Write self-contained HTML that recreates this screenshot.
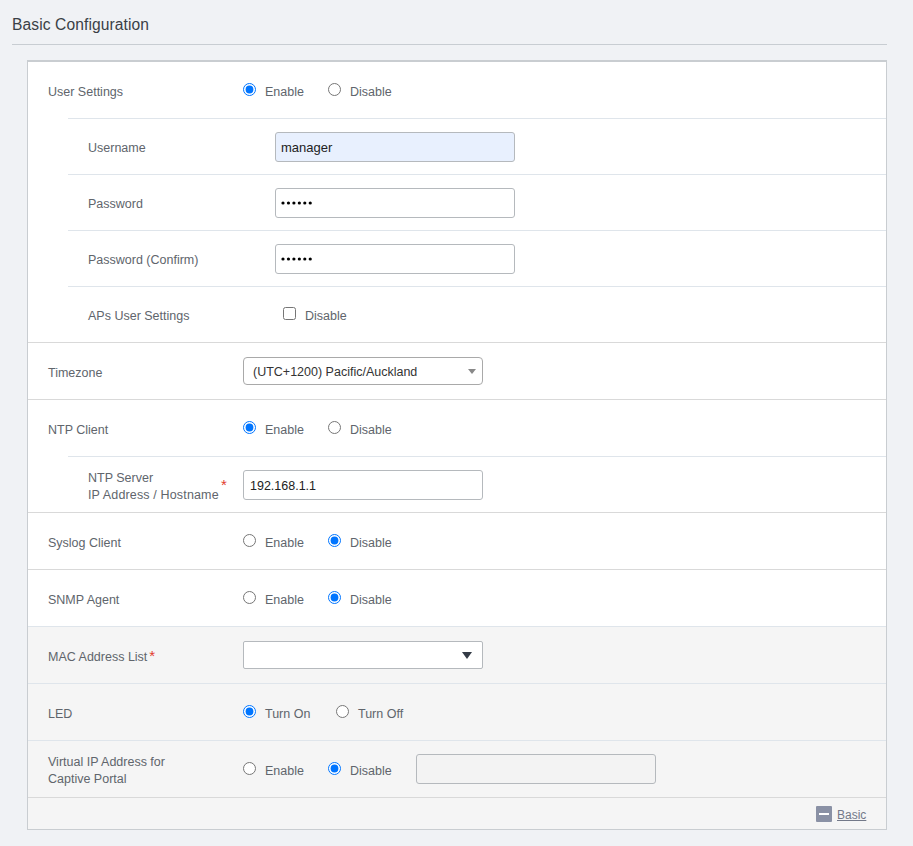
<!DOCTYPE html>
<html><head><meta charset="utf-8">
<style>
html,body{margin:0;padding:0;}
body{width:913px;height:846px;overflow:hidden;background:#f0f2f5;position:relative;font-family:"Liberation Sans",sans-serif;}
.a{position:absolute;}
.t{position:absolute;white-space:nowrap;font-size:12.5px;line-height:15px;color:#60656c;}
.title{position:absolute;left:12px;top:16px;font-size:15.6px;letter-spacing:0.1px;line-height:18px;color:#3a3f46;white-space:nowrap;}
.hl{position:absolute;height:1px;}
.g{background:#d9d9d9;}
.b{background:#dfe5eb;}
.panel{position:absolute;left:27px;top:60px;width:858px;height:767px;border:1px solid #c9cdd1;border-top:2px solid #c9cdd1;background:#fff;}
.lower{position:absolute;left:28px;top:627px;width:858px;height:202px;background:#f5f5f5;}
.nr{position:absolute;margin:0;width:13px;height:13px;}
.radio{position:absolute;width:13px;height:13px;box-sizing:border-box;border-radius:50%;border:1px solid #767676;background:#fff;}
.radio.on{border:2px solid #0075ff;}
.radio.on::after{content:"";position:absolute;left:1.5px;top:1.5px;width:6px;height:6px;border-radius:50%;background:#0075ff;}
.chk{position:absolute;width:13px;height:13px;box-sizing:border-box;border-radius:2px;border:1px solid #767676;background:#fff;}
.inp{position:absolute;box-sizing:border-box;width:240px;height:30px;border:1px solid #b5b9bd;border-radius:3px;background:#fff;}
.sel{position:absolute;box-sizing:border-box;width:240px;height:28px;border:1px solid #a9a9a9;border-radius:4px;background:#fff;}
.it{position:absolute;white-space:nowrap;font-size:13px;line-height:15px;color:#222;}
.req{color:#e23b2e;}
</style></head><body>
<div class="title">Basic Configuration</div>
<div class="hl" style="left:12px;top:44px;width:875px;background:#c8cdd2;"></div>

<div class="panel"></div>
<div class="lower"></div>

<!-- separators -->
<div class="hl b" style="left:68px;top:118px;width:818px;"></div>
<div class="hl b" style="left:68px;top:174px;width:818px;"></div>
<div class="hl b" style="left:68px;top:230px;width:818px;"></div>
<div class="hl b" style="left:68px;top:286px;width:818px;"></div>
<div class="hl g" style="left:28px;top:342px;width:858px;"></div>
<div class="hl g" style="left:28px;top:399px;width:858px;"></div>
<div class="hl b" style="left:68px;top:456px;width:818px;"></div>
<div class="hl g" style="left:28px;top:512px;width:858px;"></div>
<div class="hl g" style="left:28px;top:569px;width:858px;"></div>
<div class="hl b" style="left:28px;top:626px;width:858px;"></div>
<div class="hl b" style="left:28px;top:683px;width:858px;"></div>
<div class="hl b" style="left:28px;top:740px;width:858px;"></div>
<div class="hl g" style="left:28px;top:797px;width:858px;"></div>

<!-- Row 1: User Settings -->
<div class="t" style="left:48px;top:85px;">User Settings</div>
<input type="radio" checked class="nr" style="left:243px;top:83px;">
<div class="t" style="left:265px;top:85px;">Enable</div>
<input type="radio" class="nr" style="left:328px;top:83px;">
<div class="t" style="left:350px;top:85px;">Disable</div>

<!-- Username -->
<div class="t" style="left:88px;top:141px;">Username</div>
<div class="inp" style="left:275px;top:132px;background:#e8f0fe;"></div>
<div class="it" style="left:281px;top:140px;">manager</div>

<!-- Password -->
<div class="t" style="left:88px;top:197px;">Password</div>
<div class="inp" style="left:275px;top:188px;"></div>
<svg class="a" style="left:281px;top:199px;" width="34" height="8" viewBox="0 0 34 8" fill="#000"><circle cx="2.00" cy="4" r="1.6"/><circle cx="7.45" cy="4" r="1.6"/><circle cx="12.90" cy="4" r="1.6"/><circle cx="18.35" cy="4" r="1.6"/><circle cx="23.80" cy="4" r="1.6"/><circle cx="29.25" cy="4" r="1.6"/></svg>

<!-- Password confirm -->
<div class="t" style="left:88px;top:253px;">Password (Confirm)</div>
<div class="inp" style="left:275px;top:244px;"></div>
<svg class="a" style="left:281px;top:255px;" width="34" height="8" viewBox="0 0 34 8" fill="#000"><circle cx="2.00" cy="4" r="1.6"/><circle cx="7.45" cy="4" r="1.6"/><circle cx="12.90" cy="4" r="1.6"/><circle cx="18.35" cy="4" r="1.6"/><circle cx="23.80" cy="4" r="1.6"/><circle cx="29.25" cy="4" r="1.6"/></svg>

<!-- APs -->
<div class="t" style="left:88px;top:309px;">APs User Settings</div>
<input type="checkbox" class="nr" style="left:283px;top:307px;">
<div class="t" style="left:305px;top:309px;">Disable</div>

<!-- Timezone -->
<div class="t" style="left:48px;top:366px;">Timezone</div>
<div class="sel" style="left:243px;top:357px;"></div>
<div class="it" style="left:253px;top:365px;color:#333;font-size:12.5px;">(UTC+1200) Pacific/Auckland</div>
<div class="a" style="left:468px;top:369px;width:0;height:0;border-left:4px solid transparent;border-right:4px solid transparent;border-top:5px solid #888;"></div>

<!-- NTP client -->
<div class="t" style="left:48px;top:423px;">NTP Client</div>
<input type="radio" checked class="nr" style="left:243px;top:421px;">
<div class="t" style="left:265px;top:423px;">Enable</div>
<input type="radio" class="nr" style="left:328px;top:421px;">
<div class="t" style="left:350px;top:423px;">Disable</div>

<!-- NTP server -->
<div class="t" style="left:88px;top:471px;">NTP Server</div>
<div class="t" style="left:88px;top:488px;letter-spacing:0.15px;">IP Address / Hostname</div>
<div class="t req" style="left:221px;top:477px;font-size:15px;">*</div>
<div class="inp" style="left:243px;top:470px;"></div>
<div class="it" style="left:250px;top:479px;font-size:12.5px;">192.168.1.1</div>

<!-- Syslog -->
<div class="t" style="left:48px;top:536px;">Syslog Client</div>
<input type="radio" class="nr" style="left:243px;top:534px;">
<div class="t" style="left:265px;top:536px;">Enable</div>
<input type="radio" checked class="nr" style="left:328px;top:534px;">
<div class="t" style="left:350px;top:536px;">Disable</div>

<!-- SNMP -->
<div class="t" style="left:48px;top:593px;">SNMP Agent</div>
<input type="radio" class="nr" style="left:243px;top:591px;">
<div class="t" style="left:265px;top:593px;">Enable</div>
<input type="radio" checked class="nr" style="left:328px;top:591px;">
<div class="t" style="left:350px;top:593px;">Disable</div>

<!-- MAC -->
<div class="t" style="left:48px;top:648px;">MAC Address List<span class="req" style="font-size:15px;margin-left:2px;">*</span></div>
<div class="sel" style="left:243px;top:641px;border-radius:2px;border-color:#b5b9bd;"></div>
<div class="a" style="left:462px;top:652px;width:0;height:0;border-left:5px solid transparent;border-right:5px solid transparent;border-top:7px solid #333a45;"></div>

<!-- LED -->
<div class="t" style="left:48px;top:707px;">LED</div>
<input type="radio" checked class="nr" style="left:243px;top:705px;">
<div class="t" style="left:265px;top:707px;">Turn On</div>
<input type="radio" class="nr" style="left:336px;top:705px;">
<div class="t" style="left:358px;top:707px;">Turn Off</div>

<!-- Virtual IP -->
<div class="t" style="left:48px;top:755px;">Virtual IP Address for</div>
<div class="t" style="left:48px;top:772px;">Captive Portal</div>
<input type="radio" class="nr" style="left:243px;top:762px;">
<div class="t" style="left:265px;top:764px;">Enable</div>
<input type="radio" checked class="nr" style="left:328px;top:762px;">
<div class="t" style="left:350px;top:764px;">Disable</div>
<div class="inp" style="left:416px;top:754px;background:#f3f3f3;"></div>

<!-- Footer -->
<div class="a" style="left:816px;top:806px;width:16px;height:16px;background:#8a91a5;border-radius:1px;"></div>
<div class="a" style="left:819px;top:813px;width:10px;height:2px;background:#fff;"></div>
<div class="t" style="left:837px;top:808px;font-size:12px;color:#737989;text-decoration:underline;">Basic</div>
</body></html>
